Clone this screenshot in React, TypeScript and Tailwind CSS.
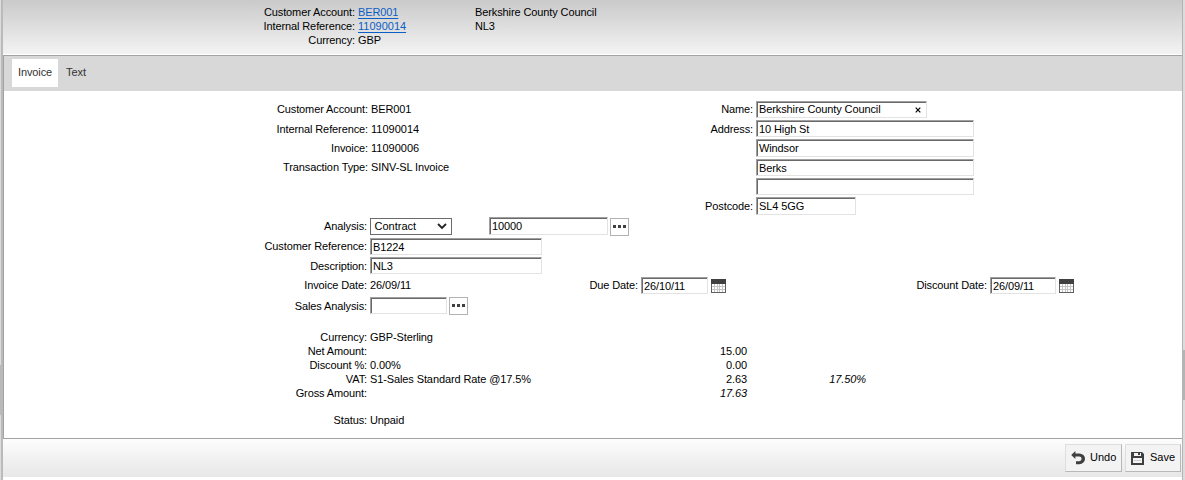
import type { ReactNode } from 'react';

function Row({ h, children }: { h: string; children?: ReactNode }) {
  return <div className={`flex shrink-0 items-start ${h}`}>{children}</div>;
}

function Label({ w, drop, children }: { w: string; drop?: boolean; children: ReactNode }) {
  return <div className={`shrink-0 whitespace-nowrap text-right ${drop ? 'pt-px' : ''} ${w}`}>{children}</div>;
}

function Value({ w = '', drop, children }: { w?: string; drop?: boolean; children?: ReactNode }) {
  return <div className={`ml-[3px] shrink-0 whitespace-nowrap ${drop ? 'pt-px' : ''} ${w}`}>{children}</div>;
}

function Field({ w, h = 'h-[17px]', value, clear }: { w: string; h?: string; value?: string; clear?: boolean }) {
  return (
    <div className={`flex shrink-0 items-center border border-t-[#a0a0a0] border-l-[#a0a0a0] border-r-[#e3e3e3] border-b-[#e3e3e3] bg-white ${w} ${h}`}>
      <div className={`flex h-full w-full justify-between border-t border-l border-[#696969] pl-px leading-[15px] whitespace-nowrap ${clear ? 'items-start' : 'items-center'}`}>
        <span className={clear ? '-mt-px' : ''}>{value}</span>
        {clear && (
          <svg className="mt-[4px] mr-[5px]" width="6" height="6" viewBox="0 0 6 6">
            <path d="M.7.7l4.6 4.6M5.3.7L.7 5.3" stroke="#000" strokeWidth="1.2" />
          </svg>
        )}
      </div>
    </div>
  );
}

function Dots() {
  return (
    <div className="ml-[2px] flex h-[18px] w-[19px] shrink-0 items-center justify-center gap-[2px] border border-[#b2b2b2] bg-white pb-px">
      <i className="h-[3px] w-[3px] bg-[#404040]" />
      <i className="h-[3px] w-[3px] bg-[#404040]" />
      <i className="h-[3px] w-[3px] bg-[#404040]" />
    </div>
  );
}

function Calendar() {
  return (
    <svg className="mt-[2px] ml-[3px] shrink-0" width="15" height="14" viewBox="0 0 15 14" shapeRendering="crispEdges">
      <rect width="15" height="14" fill="#c4c4c4" />
      <rect width="15" height="5" fill="#404040" />
      <path d="M0 5h1v9H0zM14 5h1v9h-1zM0 13h15v1H0z" fill="#606060" />
      <path
        d="M1 5h2v2H1zM4 5h2v2H4zM7 5h1v2H7zM9 5h2v2H9zM12 5h2v2h-2zM1 8h2v2H1zM4 8h2v2H4zM7 8h1v2H7zM9 8h2v2H9zM12 8h2v2h-2zM1 11h2v2H1zM4 11h2v2H4zM7 11h1v2H7zM9 11h2v2H9zM12 11h2v2h-2z"
        fill="#fff"
      />
    </svg>
  );
}

function Amount({ label, text, amount, rate, italic }: { label: string; text?: string; amount?: string; rate?: string; italic?: boolean }) {
  return (
    <div className="flex h-[14px] shrink-0 leading-[14px]">
      <Label w="w-[364px]">{label}</Label>
      <Value w="w-[261px]">{text}</Value>
      <div className={`w-[116px] text-right ${italic ? 'italic' : ''}`}>{amount}</div>
      <div className="w-[119px] text-right italic">{rate}</div>
    </div>
  );
}

const buttonStyle =
  'flex h-[28px] items-center border border-t-[#dedede] border-l-[#dedede] border-r-[#b8b8b8] border-b-[#b8b8b8] bg-[#f3f3f3]';

export default function App() {
  return (
    <div className="flex h-[480px] w-[1185px] overflow-hidden bg-white font-['Liberation_Sans',Arial,sans-serif] text-[11px] tracking-[-0.11px] text-black">
      <div className="flex w-[3px] shrink-0 bg-[#bababa]">
        <div className="flex w-px flex-col justify-between">
          <div className="h-[365px] bg-[#dcdcdc]" />
          <div className="h-[65px] bg-[#dcdcdc]" />
        </div>
      </div>

      <div className="flex w-[1179px] shrink-0 flex-col">
        <header className="h-[54px] shrink-0 bg-linear-to-b from-[#cacaca] to-[#f3f3f3] pt-[5px] leading-[14px]">
          <div className="flex h-[14px]">
            <Label w="w-[352px]">Customer Account:</Label>
            <Value w="w-[117px]"><a className="text-[#0b5ec4] underline underline-offset-2">BER001</a></Value>
            <div>Berkshire County Council</div>
          </div>
          <div className="flex h-[14px]">
            <Label w="w-[352px]">Internal Reference:</Label>
            <Value w="w-[117px]"><a className="tracking-normal text-[#0b5ec4] underline underline-offset-2">11090014</a></Value>
            <div>NL3</div>
          </div>
          <div className="flex h-[14px]">
            <Label w="w-[352px]">Currency:</Label>
            <Value>GBP</Value>
          </div>
        </header>
        <div className="h-px shrink-0 bg-white" />

        <main className="flex h-[384px] shrink-0 flex-col border-t border-b border-l border-[#a3a3a3] bg-white">
          <nav className="flex h-[35px] shrink-0 bg-[#d8d8d8] pt-[3px] pl-[8px] leading-[27px] text-[#333]">
            <div className="h-[28px] w-[46px] bg-white text-center">Invoice</div>
            <div className="ml-[8px] tracking-normal">Text</div>
          </nav>

          <div className="-ml-px flex flex-col pt-[10px] leading-[17px]">
            <Row h="h-[19px]">
              <Label w="w-[365px]">Customer Account:</Label>
              <Value w="w-[300px]">BER001</Value>
              <Label w="w-[82px]">Name:</Label>
              <div className="ml-[3px]"><Field w="w-[171px]" value="Berkshire County Council" clear /></div>
            </Row>
            <Row h="h-[19px]">
              <Label w="w-[365px]" drop>Internal Reference:</Label>
              <Value w="w-[300px]" drop><span className="tracking-normal">11090014</span></Value>
              <Label w="w-[82px]" drop>Address:</Label>
              <div className="ml-[3px]"><Field w="w-[218px]" value="10 High St" /></div>
            </Row>
            <Row h="h-[20px]">
              <Label w="w-[365px]" drop>Invoice:</Label>
              <Value w="w-[385px]" drop><span className="tracking-normal">11090006</span></Value>
              <Field w="w-[218px]" h="h-[18px]" value="Windsor" />
            </Row>
            <Row h="h-[19px]">
              <Label w="w-[365px]">Transaction Type:</Label>
              <Value w="w-[385px]">SINV-SL Invoice</Value>
              <Field w="w-[218px]" value="Berks" />
            </Row>
            <Row h="h-[19px]">
              <Value w="w-[750px]" />
              <Field w="w-[218px]" />
            </Row>
            <Row h="h-[20px]">
              <Label w="w-[750px]" drop>Postcode:</Label>
              <div className="ml-[3px]"><Field w="w-[100px]" h="h-[18px]" value="SL4 5GG" /></div>
            </Row>
            <Row h="h-[21px]">
              <Label w="w-[364px]" drop>Analysis:</Label>
              <div className="mt-px mr-[37px] ml-[3px] flex h-[17px] w-[82px] shrink-0 items-center justify-between border border-[#6b6b6b] bg-white pr-[4px] pl-[3.5px] leading-[15px]">
                <span className="tracking-normal">Contract</span>
                <svg width="10" height="7" viewBox="0 0 10 7">
                  <path d="M1 1l4 4 4-4" fill="none" stroke="#222" strokeWidth="1.8" />
                </svg>
              </div>
              <Field w="w-[119px]" h="h-[18px]" value="10000" />
              <div className="pt-px"><Dots /></div>
            </Row>
            <Row h="h-[19px]">
              <Label w="w-[364px]">Customer Reference:</Label>
              <div className="ml-[3px]"><Field w="w-[172px]" value="B1224" /></div>
            </Row>
            <Row h="h-[20px]">
              <Label w="w-[364px]" drop>Description:</Label>
              <div className="ml-[3px]"><Field w="w-[172px]" value="NL3" /></div>
            </Row>
            <Row h="h-[20px]">
              <Label w="w-[364px]">Invoice Date:</Label>
              <Value w="w-[200px]">26/09/11</Value>
              <Label w="w-[68px]">Due Date:</Label>
              <div className="ml-[3px]"><Field w="w-[67px]" value="26/10/11" /></div>
              <Calendar />
              <Label w="w-[261px]">Discount Date:</Label>
              <div className="ml-[3px]"><Field w="w-[66px]" value="26/09/11" /></div>
              <Calendar />
            </Row>
            <Row h="h-[33px]">
              <Label w="w-[364px]" drop>Sales Analysis:</Label>
              <div className="ml-[3px]"><Field w="w-[77px]" /></div>
              <Dots />
            </Row>

            <Amount label="Currency:" text="GBP-Sterling" />
            <Amount label="Net Amount:" amount="15.00" />
            <Amount label="Discount %:" text="0.00%" amount="0.00" />
            <Amount label="VAT:" text="S1-Sales Standard Rate @17.5%" amount="2.63" rate="17.50%" />
            <Amount label="Gross Amount:" amount="17.63" italic />
            <div className="h-[13px]" />
            <Amount label="Status:" text="Unpaid" />
          </div>
        </main>

        <footer className="flex h-[38px] shrink-0 justify-end gap-[3px] bg-linear-to-b from-[#fdfdfd] to-[#e7e7e7] pt-[5px] pr-px">
          <div className={`${buttonStyle} w-[57px] pl-[5px]`}>
            <svg width="14" height="14" viewBox="0 0 14 14">
              <path d="M4.4 0v2.4h4a5.4 5.2 0 0 1 0 10.8H5v-3h3.2a2.4 2.4 0 0 0 0-4.8H4.4v2.6L.2 4z" fill="#404040" />
            </svg>
            <span className="mb-[2px] ml-[5px] tracking-normal">Undo</span>
          </div>
          <div className={`${buttonStyle} w-[56px] pl-[5px]`}>
            <svg width="13" height="13" viewBox="0 0 13 13">
              <path fillRule="evenodd" d="M0 0h11l2 2v11H0zM3 1v3h7V1H9v2H7V1zM2 6v5h9V6z" fill="#404040" />
              <path d="M3 8h7v1H3z" fill="#ccc" />
            </svg>
            <span className="mb-[2px] ml-[6px] tracking-normal">Save</span>
          </div>
        </footer>
      </div>

      <div className="flex w-[3px] shrink-0">
        <div className="w-px bg-[#b4b4b4]" />
        <div className="w-[2px] bg-[#dcdcdc] pt-[350px]">
          <div className="h-[50px] bg-[#b4b4b4]" />
        </div>
      </div>
    </div>
  );
}
